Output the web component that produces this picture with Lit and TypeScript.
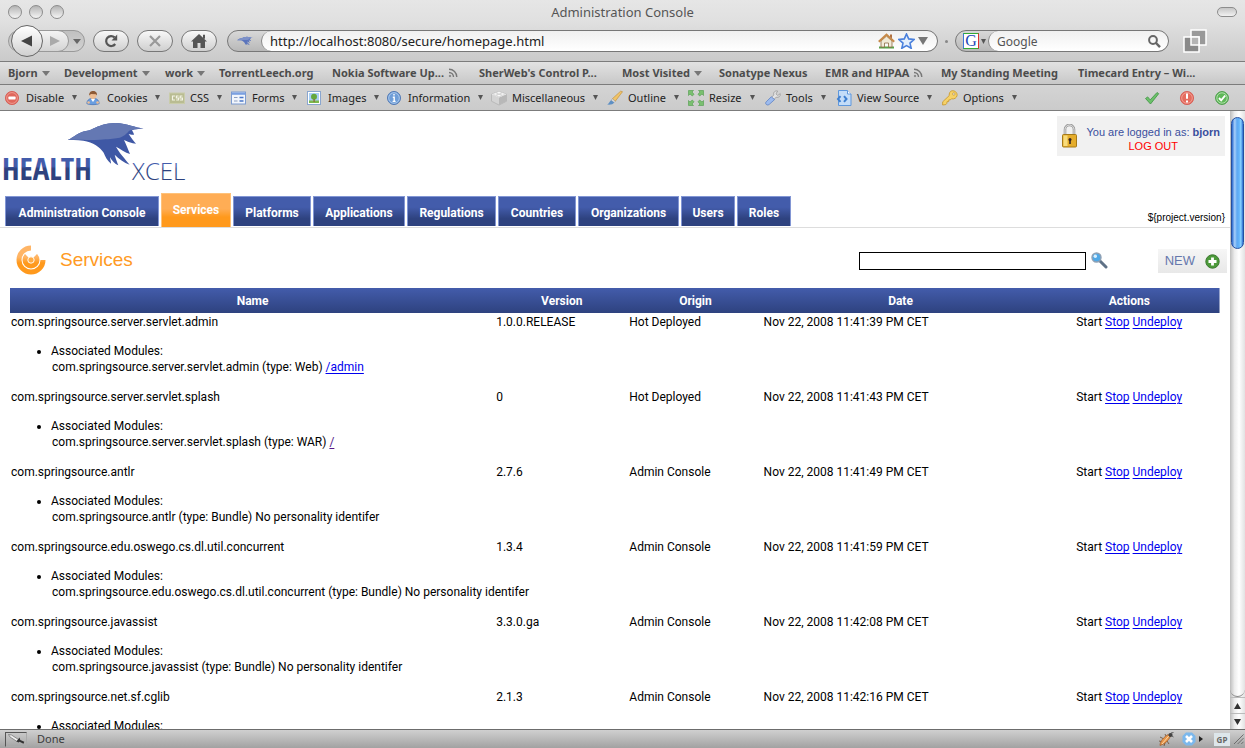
import { LitElement, html, svg, css, nothing, type TemplateResult } from "lit";
import { customElement } from "lit/decorators.js";
import { classMap } from "lit/directives/class-map.js";

const rss = html`<svg width="10" height="10" viewBox="0 0 10 10" fill="none" stroke="#777" stroke-width="1.4"><circle cx="2" cy="8" r=".8" fill="#777" stroke-width=".6"/><path d="M1 4.5A4.5 4.5 0 0 1 5.5 9M1 1.2A7.8 7.8 0 0 1 8.8 9"/></svg>`;
const caret = html`<svg width="8" height="5" viewBox="0 0 8 5"><path d="M0 0h8L4 5z" fill="#777"/></svg>`;
const smallCaret = html`<svg width="5" height="5" viewBox="0 0 5 5"><path d="M0 0h5L2.5 5z" fill="#555"/></svg>`;

interface Bookmark { label: string; mark?: "caret" | "rss"; }
const bookmarks: Bookmark[] = [
  { label: "Bjorn", mark: "caret" },
  { label: "Development", mark: "caret" },
  { label: "work", mark: "caret" },
  { label: "TorrentLeech.org" },
  { label: "Nokia Software Up...", mark: "rss" },
  { label: "SherWeb's Control P..." },
  { label: "Most Visited", mark: "caret" },
  { label: "Sonatype Nexus" },
  { label: "EMR and HIPAA", mark: "rss" },
  { label: "My Standing Meeting" },
  { label: "Timecard Entry – Wi..." },
];

const tools: { label: string; icon: TemplateResult }[] = [
  { label: "Disable", icon: html`<svg width="16" height="16" viewBox="0 0 16 16"><circle cx="7" cy="8" r="6.6" fill="#e0675c" stroke="#d4574e" stroke-width=".8"/><circle cx="7" cy="8" r="5.4" fill="none" stroke="#f0a49c" stroke-width=".8"/><rect x="3.4" y="6.6" width="7.2" height="2.8" rx=".6" fill="#fff"/></svg>` },
  { label: "Cookies", icon: html`<svg width="16" height="16" viewBox="0 0 16 16"><path d="M.8 13.5c.2-3 2.200-4.700 4-4.900h4.400c2.200.3 3.700 2 4 4.900-1.500 1.500-11 1.500-12.400 0z" fill="#6a9ee0" stroke="#3f70b8" stroke-width=".7"/><path d="M4.800 8.800L7 12l2.200-3.200z" fill="#fff"/><circle cx="7" cy="5.600" r="3.400" fill="#eebd92"/><path d="M3.200 5.600C2.900 2.400 5 1.100 7.200 1.100c2.400 0 4.200 1.500 3.700 4.500L9.800 4.200 5 4z" fill="#8e5a35"/><circle cx="2.600" cy="12.500" r="1.300" fill="#eebd92"/><circle cx="11.600" cy="12.500" r="1.300" fill="#eebd92"/></svg>` },
  { label: "CSS", icon: html`<svg width="16" height="16" viewBox="0 0 16 16"><rect x=".5" y="3" width="15" height="10.500" fill="#b9bc92" stroke="#c9ccaa"/><path d="M6 6H3.500v4H6M9.600 6H7.400v2h2.200v2H7.200M13.400 6h-2.200v2h2.200v2H11" fill="none" stroke="#f4f4e6" stroke-width="1.200"/></svg>` },
  { label: "Forms", icon: html`<svg width="16" height="16" viewBox="0 0 16 16"><rect x=".5" y="2" width="14" height="12" fill="#f2f6fc" stroke="#7c9bd0"/><rect x="1" y="2.500" width="13" height="2.300" fill="#7ba0e0"/><path d="M3 7.500h3.500M3 11h3.500" stroke="#8d9fc0"/><path d="M8.500 7.500h4M8.500 11h4" stroke="#4a77c8" stroke-width="1.600"/></svg>` },
  { label: "Images", icon: html`<svg width="16" height="16" viewBox="0 0 16 16"><rect x=".5" y="1.500" width="13" height="13" fill="#fff" stroke="#8aa6cf"/><path d="M2 3h10v10H2z" fill="#a9d0f5"/><path d="M2 10.500h10V13H2z" fill="#7cb84c"/><circle cx="7" cy="6.700" r="3" fill="#65a83c"/><path d="M6.500 9h1.200v3H6.500z" fill="#8c6132"/></svg>` },
  { label: "Information", icon: html`<svg width="16" height="16" viewBox="0 0 16 16"><circle cx="7" cy="8" r="6.500" fill="#6f9ed8" stroke="#5078b4"/><circle cx="7" cy="8" r="5.300" fill="none" stroke="#b8d2f0" stroke-width=".8"/><path d="M7 4v1.600M5.800 7.200h1.400v4M5.600 11.400h3" stroke="#fff" stroke-width="1.400" fill="none"/></svg>` },
  { label: "Miscellaneous", icon: html`<svg width="16" height="16" viewBox="0 0 16 16"><path d="M8 1.500l7.500 2.700v7L8 15 .5 11.200v-7z" fill="#d4d4d4" stroke="#aaa" stroke-width=".6"/><path d="M8 7.500V15l7.500-3.800v-7z" fill="#b8b8b8"/><path d="M8 7.500L.5 4.200 8 1.500l7.500 2.700z" fill="#efefef"/><g fill="#fafafa" stroke="#bbb" stroke-width=".5"><ellipse cx="8" cy="2.700" rx="2" ry="1.200"/><ellipse cx="4.500" cy="4" rx="2" ry="1.200"/><ellipse cx="11.500" cy="4" rx="2" ry="1.200"/><ellipse cx="8" cy="5.600" rx="2" ry="1.200"/></g></svg>` },
  { label: "Outline", icon: html`<svg width="16" height="16" viewBox="0 0 16 16"><path d="M15.500 1.700L8.300 11.200 5.300 8.800 13.600 1.200z" fill="#f0c468" stroke="#c08a34" stroke-width=".6"/><path d="M5.300 8.800l3 2.400-1.200 1.400-3-2.400z" fill="#ddd" stroke="#999" stroke-width=".5"/><path d="M4.100 10.200l3 2.400c-1 2-3.600 2.200-7 2 2-.8 2.400-3.400 4-4.400z" fill="#5d8fc4"/></svg>` },
  { label: "Resize", icon: html`<svg width="16" height="16" viewBox="0 0 16 16" fill="#7ac070" stroke="#4f9a4c" stroke-width=".6"><path d="M.5.500h5L4 2l2 2.200L4.300 6 2 4 .5 5.500z"/><path d="M15.500.500h-5L12 2l-2 2.200L11.700 6 14 4l1.500 1.500zM.5 15.500h5L4 14l2-2.200L4.300 10 2 12 .5 10.500zM15.500 15.500h-5L12 14l-2-2.200 1.700-1.800L14 12l1.500-1.500z"/></svg>` },
  { label: "Tools", icon: html`<svg width="16" height="16" viewBox="0 0 16 16"><path d="M15.200 3.600l-2.400 1.900-1.800-1.600L12.600 1c-2.600-.6-4.600 1.500-3.800 3.900L6.600 7.300l2.200 2.200 2.300-2.200c2.600.6 4.700-1.200 4.100-3.700z" fill="#e2e2e2" stroke="#909090" stroke-width=".7"/><path d="M6.300 6.800L1.200 11.800c-1.800 1.900 1 4.300 2.900 2.700L9.600 9.600z" fill="#9dbbee" stroke="#5f83c4" stroke-width=".8"/></svg>` },
  { label: "View Source", icon: html`<svg width="16" height="16" viewBox="0 0 16 16"><path d="M2.500.500h9l3.500 3.500v11.500H2.500z" fill="#c3dcf8" stroke="#5e97dc"/><path d="M11.500.500V4H15" fill="#fff" stroke="#5e97dc"/><path d="M4.500 6.200L2 9l2.500 2.800M8 6.200L10.500 9 8 11.800" fill="none" stroke="#3e7fd0" stroke-width="2"/></svg>` },
  { label: "Options", icon: html`<svg width="16" height="16" viewBox="0 0 16 16"><path d="M9.800.800c3-.5 5.600 1.800 5.300 4.500-.3 2.600-3 4.200-5.700 3.500l-1 1-1.600.1-.1 1.700-1.700.1-.2 1.700-1 1.200-3.200.400.100-3.200L7.200 5.600C7 3.400 7.800 1.400 9.800.800z" fill="#f6d268" stroke="#c89528" stroke-width=".8"/><circle cx="11.800" cy="4" r="1.300" fill="#d8d8d8" stroke="#c89528" stroke-width=".6"/></svg>` },
];

const tabs = ["Administration Console", "Services", "Platforms", "Applications", "Regulations", "Countries", "Organizations", "Users", "Roles"];

interface Service {
  name: string; version: string; origin: string; date: string;
  type: string; link?: string; visited?: boolean;
}
const services: Service[] = [
  { name: "com.springsource.server.servlet.admin", version: "1.0.0.RELEASE", origin: "Hot Deployed", date: "Nov 22, 2008 11:41:39 PM CET", type: "Web", link: "/admin" },
  { name: "com.springsource.server.servlet.splash", version: "0", origin: "Hot Deployed", date: "Nov 22, 2008 11:41:43 PM CET", type: "WAR", link: "/", visited: true },
  { name: "com.springsource.antlr", version: "2.7.6", origin: "Admin Console", date: "Nov 22, 2008 11:41:49 PM CET", type: "Bundle" },
  { name: "com.springsource.edu.oswego.cs.dl.util.concurrent", version: "1.3.4", origin: "Admin Console", date: "Nov 22, 2008 11:41:59 PM CET", type: "Bundle" },
  { name: "com.springsource.javassist", version: "3.3.0.ga", origin: "Admin Console", date: "Nov 22, 2008 11:42:08 PM CET", type: "Bundle" },
  { name: "com.springsource.net.sf.cglib", version: "2.1.3", origin: "Admin Console", date: "Nov 22, 2008 11:42:16 PM CET", type: "Bundle" },
];

// The brand bird: a dark body with feathers below a lighter wing.
const bird = (body: string, wing: string) => svg`
  <path d="M203 84C222 76 236 60 258 57C278 56 290 36 345 33C385 34 405 48 431 49C415 52 404 51 396 55C400 62 402 66 402 68C396 69 390 67 386 66C392 76 402 88 408 95C396 94 380 88 372 84C378 96 384 112 390 126C376 122 360 110 348 104C356 120 376 142 389 158C372 152 356 140 344 128C347 140 352 152 355 160C344 156 336 146 330 136C331 144 333 150 333 155C322 146 316 134 311 122C300 106 280 90 250 86C234 83 218 84 203 84Z" fill=${body} />
  <path d="M203 84C222 76 236 60 258 57C278 56 290 36 345 33C385 34 405 48 431 49C400 52 392 54 386 58C366 82 350 80 300 83C260 85 235 82 203 84Z" fill=${wing} />`;

@customElement("app-root")
export class AppRoot extends LitElement {
  static styles = css`
    :host {
      display: flex; flex-direction: column; height: 100vh; overflow: hidden;
      background: #fff; color: #000;
      font-family: "Noto Sans", "Open Sans", sans-serif; font-size: 12px;
    }
    * { box-sizing: border-box; }
    button, input { font: inherit; color: inherit; margin: 0; padding: 0; border: 0; background: none; }
    svg { display: block; flex: none; }

    .window-top { background: linear-gradient(#e6e6e6, #e0e0e0 35%, #cacaca); border-bottom: 1px solid #7c7c7c; }
    .titlebar { display: grid; grid-template-columns: 80px 1fr 80px; align-items: center; height: 23px; padding: 0 8px; }
    .lights { display: flex; gap: 7px; }
    .light { width: 14px; height: 14px; border-radius: 50%; border: 1px solid #8c8c8c; background: linear-gradient(#b4b4b4, #f4f4f4); }
    .title { text-align: center; font-size: 13px; line-height: 18px; color: #555; }
    .pill { justify-self: end; width: 20px; height: 10px; border-radius: 5px; border: 1px solid #8c8c8c; background: linear-gradient(#c6c6c6, #f2f2f2); }

    .navbar { display: flex; align-items: center; gap: 8px; height: 38px; padding: 0 38px 2px 8px; }
    .history { display: flex; align-items: center; width: 77px; height: 22px; border: 1px solid #999; border-radius: 11px; background: linear-gradient(#c0c0c0, #d2d2d2); }
    .back { width: 32px; height: 32px; flex: none; margin-left: 2px; border-radius: 50%; border: 1px solid #666; background: linear-gradient(#fff, #d0d0d0); display: grid; place-items: center; z-index: 1; }
    .forward { width: 32px; height: 22px; flex: none; margin-left: -6px; padding-left: 4px; border: 1px solid #999; border-radius: 0 11px 11px 0; background: linear-gradient(#f4f4f4, #d4d4d4); display: grid; place-items: center; }
    .recent { flex: 1; display: grid; place-items: center; }
    .round { width: 36px; height: 22px; border-radius: 11px; border: 1px solid #777; background: linear-gradient(#f8f8f8, #cfcfcf); display: grid; place-items: center; flex: none; }
    .urlbox, .searchbox { display: flex; height: 22px; border: 1px solid #777; border-radius: 11px; background: linear-gradient(#d8d8d8, #b8b8b8); overflow: hidden; }
    .urlbox { flex: 1; margin-left: 2px; }
    .searchbox { width: 214px; flex: none; }
    .favicon { width: 33px; flex: none; display: grid; place-items: center; }
    .engine { width: 32px; flex: none; display: flex; align-items: center; justify-content: flex-end; gap: 2px; padding-right: 2px; }
    .google { width: 16px; height: 16px; flex: none; border: 1px solid #3c78d8; border-right-color: #d33; border-bottom-color: #3a3; border-top-color: #3a3; background: #fff; color: #2347b8; font: 16px/14px "Liberation Serif", serif; text-align: center; }
    .field { flex: 1; min-width: 0; display: flex; align-items: center; gap: 3px; border-left: 1px solid #888; border-radius: 10px; background: linear-gradient(#f0f0f0, #fff); padding: 0 9px 0 8px; }
    .field input { flex: 1; min-width: 0; width: 0; height: 20px; font-size: 13px; outline: 0; color: #222; }
    .searchbox .field { padding-right: 7px; }
    .searchbox .field input { font-size: 12px; color: #555; }
    .dot { width: 3px; height: 3px; border-radius: 50%; background: #888; margin-left: -1px; margin-right: -1px; }
    .windows { margin-left: 6px; }

    .bookmarks { display: grid; grid-template-columns: 56px 101px 54px 113px 147px 143px 97px 106px 116px 137px auto; justify-content: start; align-items: center; height: 23px; padding-left: 8px; background: linear-gradient(#e2e2e2, #c8c8c8); border-bottom: 1px solid #7c7c7c; }
    .bookmark { display: flex; align-items: center; gap: 4px; color: #4c4c4c; font-size: 11px; font-weight: 700; line-height: 16px; white-space: nowrap; text-decoration: none; }

    .devbar { display: grid; grid-template-columns: 81px 83px 62px 76px 80px 104px 116px 81px 77px 71px 106px 1fr; align-items: center; height: 26px; padding: 0 15px 0 5px; background: linear-gradient(#d4d4d4, #cbcbcb); border-bottom: 1px solid #7c7c7c; }
    .tool { display: flex; align-items: center; gap: 5px; color: #222; font-size: 11px; line-height: 16px; white-space: nowrap; }
    .tool .caret { padding-left: 3px; }
    .last { display: flex; align-items: center; justify-content: space-between; }
    .status-icons { display: flex; gap: 19px; }

    .viewport { flex: 1; min-height: 0; display: flex; }
    .page { flex: 1; min-width: 0; overflow: hidden; font-family: Roboto, "Noto Sans", sans-serif; font-size: 12px; line-height: 16px; }
    .masthead { display: flex; justify-content: space-between; align-items: flex-start; padding: 5px 5px 0 0; }
    .logo { margin-top: 4px; overflow: visible; }
    .logo-bold { font-family: "Open Sans Condensed", "Roboto Condensed", "Liberation Sans Narrow", "Open Sans", sans-serif; font-weight: 700; font-size: 31px; }
    .logo-light { font-family: "Open Sans", sans-serif; font-weight: 300; font-size: 24px; }
    .login { display: flex; align-items: center; gap: 8px; height: 40px; padding: 0 5px 0 4px; background: #f1f1f1; color: #3a4f9e; font: 11px/14px "Liberation Sans", Arial, sans-serif; text-align: center; }
    .who { padding-top: 6px; }
    .login a { color: #f00; text-decoration: none; }
    .tabrow { display: flex; justify-content: space-between; align-items: flex-end; margin-top: 9px; padding: 0 5px; border-bottom: 1px solid #ddd; }
    .tabs { display: grid; grid-template-columns: 154px 70px 78px 92px 89px 78px 101px 54px 54px; gap: 2px; align-items: end; }
    .tab { height: 30px; margin-bottom: 1px; border: 1px solid #8296d4; border-bottom: 0; background: linear-gradient(#435cab 35%, #2e427f 75%); color: #fff; font-weight: 700; font-size: 12px; line-height: 33px; text-align: center; text-decoration: none; white-space: nowrap; }
    .tab.active { height: 34px; margin-bottom: 0; border-color: #ffc27a; background: linear-gradient(#ffad55 45%, #ff991c 70%); }
    .version { font: 10px/18px "Liberation Sans", Arial, sans-serif; }

    .section { display: flex; align-items: center; padding: 17px 3px 13px 16px; }
    .section h1 { margin: 0 auto 0 14px; color: #ff9a24; font: 19px/28px "Liberation Sans", Arial, sans-serif; }
    .search { display: flex; align-items: center; gap: 5px; margin-right: 50px; padding-top: 2px; }
    .search input { width: 227px; height: 18px; border: 1px solid #000; background: #fff; }
    .search button { padding-bottom: 2px; }
    .new { display: flex; align-items: center; gap: 10px; height: 24px; margin-top: 2px; padding: 0 7px; background: linear-gradient(#f6f6f6, #e8e8e8); color: #6678ad; font: 13px/16px "Liberation Sans", Arial, sans-serif; }

    .table-wrap { padding: 0 10px; }
    table { width: 100%; table-layout: fixed; border-collapse: collapse; }
    th { height: 25px; padding: 0 1px; color: #fff; font-weight: 700; }
    thead { background: linear-gradient(#435cab, #2e427f); }
    .c-name { width: 40.1%; } .c-version { width: 11%; } .c-origin { width: 11.1%; } .c-date { width: 22.8%; } .c-actions { width: 15%; }
    td { padding: 1px; vertical-align: top; white-space: nowrap; }
    .actions { text-align: center; }
    ul { margin: 13px 0 12px; padding-left: 40px; }
    .module { padding-left: 1px; }
    td a { color: #00e; text-underline-offset: 2px; }
    td a.seen { color: #551a8b; }

    .scrollbar { width: 15px; flex: none; display: flex; flex-direction: column; background: linear-gradient(90deg, #bdbdbd, #ececec 30%, #fff 60%, #e2e2e2); }
    .track { flex: 1; padding: 6px 1px; border-bottom: 1px solid #888; border-radius: 0 0 8px 8px; }
    .thumb { height: 23%; border-radius: 7px; border: 1px solid #2450a0; background: linear-gradient(90deg, #2a6ad0, #a8d0fa 25%, #5ea8f2 45%, #62b4fa 65%, #8ad2ff 80%, #2a6ad0); }
    .step { height: 16px; display: grid; place-items: center; border-top: 1px solid #bbb; }

    .statusbar { display: flex; align-items: center; height: 19px; padding: 0 1px 0 5px; border-top: 1px solid #6c6c6c; background: linear-gradient(#d0d0d0, #a2a2a2); font-size: 11px; line-height: 16px; color: #3c3c3c; }
    .picker { width: 22px; height: 15px; border: 1px solid #555; border-right-color: #aaa; border-bottom-color: #aaa; display: grid; place-items: center; margin-right: 10px; }
    .extras { display: flex; align-items: center; gap: 3px; margin-left: auto; }
    .gp { margin: 0 1px 0 8px; width: 16px; height: 13px; background: #dde6ea; color: #666; font-size: 8px; font-weight: 700; line-height: 13px; text-align: center; }
    .bug { margin-right: 5px; }
  `;

  private renderBrowser() {
    return html`
      <header class="window-top">
        <div class="titlebar">
          <div class="lights"><span class="light"></span><span class="light"></span><span class="light"></span></div>
          <div class="title">Administration Console</div>
          <span class="pill"></span>
        </div>
        <div class="navbar">
          <div class="history">
            <button class="back" aria-label="Back"><svg width="12" height="12" viewBox="0 0 12 12"><path d="M0 6L11 .5v11z" fill="#444"/></svg></button>
            <button class="forward" aria-label="Forward"><svg width="10" height="10" viewBox="0 0 10 10"><path d="M10 5L0 0v10z" fill="#aaa"/></svg></button>
            <button class="recent" aria-label="Recent pages"><svg width="8" height="5" viewBox="0 0 8 5"><path d="M0 0h8L4 5z" fill="#666"/></svg></button>
          </div>
          <button class="round" aria-label="Reload"><svg width="14" height="14" viewBox="0 0 14 14"><path d="M11.200 10A5 5 0 1 1 10.600 3.400" fill="none" stroke="#555" stroke-width="2.200"/><path d="M13.200.500v6H7.500z" fill="#555"/></svg></button>
          <button class="round" aria-label="Stop"><svg width="12" height="12" viewBox="0 0 12 12"><path d="M1 1l10 10M11 1L1 11" stroke="#999" stroke-width="2.200"/></svg></button>
          <button class="round" aria-label="Home"><svg width="16" height="14" viewBox="0 0 16 14"><path d="M8 0l8 7.500h-2V14H9.500V9h-3v5H2V7.500H0z" fill="#555"/><path d="M12 .800h2v4h-2z" fill="#555"/></svg></button>
          <div class="urlbox">
            <span class="favicon"><svg width="16" height="10" viewBox="200 30 235 132">${bird("#5a74bc", "#7c90c8")}</svg></span>
            <div class="field">
              <input aria-label="Address" value="http://localhost:8080/secure/homepage.html" />
              <svg width="17" height="16" viewBox="0 0 17 16"><path d="M1 14.500h15" stroke="#5aa048" stroke-width="2"/><path d="M3 8v6h3.500v-4h4v4H14V8L8.500 3z" fill="#f0ead8" stroke="#8c6b44" stroke-width=".8"/><path d="M.8 8.800L8.500 1.800l7.700 7" fill="none" stroke="#c68a4a" stroke-width="2.200"/><path d="M12 1.500h2v4l-2-1.800z" fill="#b07040"/></svg>
              <svg width="17" height="16" viewBox="0 0 17 16"><path d="M8.500 1l2.200 4.900 5.300.6-4 3.600 1.200 5.200-4.700-2.700-4.700 2.700L5 10.100 1 6.500l5.300-.6z" fill="#e4effc" stroke="#4a80dc" stroke-width="1.600"/></svg>
              <svg width="10" height="8" viewBox="0 0 10 8"><path d="M0 0h10L5 8z" fill="#777"/></svg>
            </div>
          </div>
          <span class="dot"></span>
          <div class="searchbox">
            <span class="engine"><span class="google">G</span>${smallCaret}</span>
            <div class="field">
              <input aria-label="Web search" value="Google" />
              <svg width="13" height="13" viewBox="0 0 13 13" fill="none" stroke="#666"><circle cx="5" cy="5" r="3.900" stroke-width="2"/><path d="M8 8l4 4.200" stroke-width="2.400"/></svg>
            </div>
          </div>
          <svg class="windows" width="24" height="24" viewBox="0 0 24 24"><rect x="8" y="1" width="15" height="15" fill="#999" stroke="#fff" stroke-width="1.500"/><rect x="1" y="8" width="15" height="15" fill="#8a8a8a" stroke="#fff" stroke-width="1.500"/><path d="M8 8h8v8H8z" fill="#b4b4b4" stroke="#fff" stroke-width="1.500"/></svg>
        </div>
      </header>
      <nav class="bookmarks">
        ${bookmarks.map((b) => html`<a class="bookmark" href="#">${b.label}${b.mark === "caret" ? caret : b.mark === "rss" ? rss : nothing}</a>`)}
      </nav>
      <div class="devbar">
        ${tools.slice(0, -1).map((t) => this.renderTool(t))}
        <div class="last">
          ${this.renderTool(tools[tools.length - 1])}
          <div class="status-icons">
            <svg width="16" height="16" viewBox="0 0 16 16"><path d="M1.500 8.500l2.200-1.600 2.500 3L13 2.500l1.700 1.200L6.500 14z" fill="#6cc06a" stroke="#3d9442" stroke-width=".8"/></svg>
            <svg width="16" height="16" viewBox="0 0 16 16"><circle cx="8" cy="8" r="6.600" fill="#e56c5e" stroke="#d4574e" stroke-width=".8"/><circle cx="8" cy="8" r="5.300" fill="none" stroke="#f3a8a0" stroke-width=".8"/><path d="M8 3.500v5.200M8 10.500v2" stroke="#fff" stroke-width="2"/></svg>
            <svg width="16" height="16" viewBox="0 0 16 16"><circle cx="8" cy="8" r="6.400" fill="#5fb858" stroke="#4a9c48"/><circle cx="8" cy="8" r="5.200" fill="none" stroke="#c4e8c0" stroke-width=".8"/><path d="M5 8l2.200 2.400L11.200 5.500" fill="none" stroke="#fff" stroke-width="1.900"/></svg>
          </div>
        </div>
      </div>`;
  }

  private renderTool(t: { label: string; icon: TemplateResult }) {
    return html`<button class="tool">${t.icon}<span>${t.label}</span><span class="caret">${smallCaret}</span></button>`;
  }

  private renderRow(s: Service) {
    return html`<tr>
      <td>${s.name}
        <ul><li>Associated Modules:<div class="module">${s.name} (type: ${s.type}) ${s.link
          ? html`<a href="#" class=${classMap({ seen: !!s.visited })}>${s.link}</a>`
          : "No personality identifer"}</div></li></ul>
      </td>
      <td>${s.version}</td><td>${s.origin}</td><td>${s.date}</td>
      <td class="actions">Start <a href="#">Stop</a> <a href="#">Undeploy</a></td>
    </tr>`;
  }

  render() {
    return html`
      ${this.renderBrowser()}
      <div class="viewport">
        <main class="page">
          <div class="masthead">
            <svg class="logo" width="190" height="64" viewBox="0 0 190 64" role="img" aria-label="Health Xcel">
              <defs>
                <linearGradient id="ink" x1="0" y1="35" x2="0" y2="60" gradientUnits="userSpaceOnUse"><stop offset="0" stop-color="#435cab"/><stop offset=".45" stop-color="#435cab"/><stop offset=".55" stop-color="#2e427f"/><stop offset="1" stop-color="#2e427f"/></linearGradient>
              </defs>
              <svg x="0" y="0" width="190" height="64" viewBox="0 24 570 192">${bird("#3f58a5", "#6478b3")}</svg>
              <text class="logo-bold" x="2" y="60" fill="url(#ink)">HEALTH</text>
              <text class="logo-light" x="132" y="60" fill="url(#ink)">XCEL</text>
            </svg>
            <div class="login">
              <svg width="17" height="24" viewBox="0 0 17 24"><path d="M4 11V5.500a4.500 4.500 0 0 1 9 0V11" fill="none" stroke="#999" stroke-width="2.600"/><path d="M4 11V5.500a4.500 4.500 0 0 1 9 0V11" fill="none" stroke="#e4e4e4"/><rect x="1.500" y="10.500" width="14" height="12.500" rx="1" fill="#e5ad2c" stroke="#a67a18"/><path d="M2.500 11.500h4v10.500h-4z" fill="#f8dc7c"/><circle cx="9" cy="15.500" r="1.500" fill="#322"/><path d="M8.200 16h1.600v4H8.200z" fill="#322"/></svg>
              <div class="who">You are logged in as: <b>bjorn</b><br /><a href="#">LOG OUT</a></div>
            </div>
          </div>
          <div class="tabrow">
            <nav class="tabs">
              ${tabs.map((t) => html`<a href="#" class=${classMap({ tab: true, active: t === "Services" })}>${t}</a>`)}
            </nav>
            <span class="version">\${project.version}</span>
          </div>
          <div class="section">
            <svg width="30" height="30" viewBox="0 0 30 30">
              <defs><linearGradient id="sun" gradientUnits="userSpaceOnUse" x1="0" y1="0" x2="0" y2="30"><stop offset=".4" stop-color="#ffb566"/><stop offset=".6" stop-color="#ff991c"/></linearGradient></defs>
              <path d="M15 .5A14.500 14.500 0 1 0 29.500 15H24.500A9.500 9.500 0 1 1 15 5.500z" fill="url(#sun)"/>
              <path d="M15 15L9 9A8.500 8.500 0 1 0 21 9z" fill="url(#sun)"/>
              <circle cx="15" cy="15" r="3.200" fill="#ffab44" stroke="#fff" stroke-width=".9"/>
            </svg>
            <h1>Services</h1>
            <form class="search">
              <input type="text" aria-label="Search services" />
              <button type="button" aria-label="Search"><svg width="17" height="17" viewBox="0 0 17 17"><path d="M8.500 8.500l6.500 6.500" stroke="#5f7186" stroke-width="3" stroke-linecap="round"/><circle cx="5.500" cy="5.500" r="4.500" fill="#4fa8e6" stroke="#8ea0b4" stroke-width="1.400"/><circle cx="4.300" cy="4.300" r="1.700" fill="#d8f0ff"/></svg></button>
            </form>
            <button class="new">NEW<svg width="15" height="15" viewBox="0 0 15 15"><circle cx="7.500" cy="7.500" r="6.700" fill="#4c9a3a" stroke="#3c7a30"/><path d="M7.500 3.500v8M3.500 7.500h8" stroke="#fff" stroke-width="2.800"/></svg></button>
          </div>
          <div class="table-wrap">
            <table>
              <thead><tr><th class="c-name">Name</th><th class="c-version">Version</th><th class="c-origin">Origin</th><th class="c-date">Date</th><th class="c-actions">Actions</th></tr></thead>
              <tbody>${services.map((s) => this.renderRow(s))}</tbody>
            </table>
          </div>
        </main>
        <div class="scrollbar">
          <div class="track"><div class="thumb"></div></div>
          <div class="step"><svg width="7" height="6" viewBox="0 0 7 6"><path d="M0 6h7L3.500 0z" fill="#333"/></svg></div>
          <div class="step"><svg width="7" height="6" viewBox="0 0 7 6"><path d="M0 0h7L3.500 6z" fill="#333"/></svg></div>
        </div>
      </div>
      <footer class="statusbar">
        <span class="picker"><svg width="18" height="12" viewBox="0 0 18 12"><path d="M1.500 1.500l3 .5 7 4.500-1.500 2-7-4.500z" fill="#eee" stroke="#777" stroke-width=".8"/><path d="M12.500 4.500l-3 4 2 1 1-.800 4 2 .800-2-4-1.700z" fill="#333"/></svg></span>
        Done
        <div class="extras">
          <svg class="bug" width="16" height="15" viewBox="0 0 16 15"><path d="M2 5l4 2M1 9l4 1M6 14l1-3M11 12L9 9M7 2l2 4" stroke="#6a4a30" stroke-width=".8"/><path d="M12.500 4.500C10 9 7 12 2 13.500 2 9 6 5 10 2.500z" fill="#e8964a" stroke="#a05a28" stroke-width=".7"/><path d="M11.300 3.500L4 12" stroke="#fbd9a8"/><circle cx="12.500" cy="3" r="2.100" fill="#444"/><path d="M13 1l2.500-.5M14 4l1.500 1" stroke="#444" stroke-width=".8"/></svg>
          <svg width="14" height="14" viewBox="0 0 14 14"><path d="M4 .500h6L13.500 4v6L10 13.500H4L.5 10V4z" fill="#7cb8ec"/><path d="M4 4l6 6M10 4l-6 6" stroke="#fff" stroke-width="2.600"/></svg>
          <svg width="4" height="6" viewBox="0 0 4 6"><path d="M0 0v6l4-3z" fill="#222"/></svg>
          <span class="gp">GP</span>
          <svg width="10" height="12" viewBox="2 1 11 12"><path d="M2 12.500L12.500 2M6 12.500L12.500 6M10 12.500l2.500-2.500" stroke="#666"/></svg>
        </div>
      </footer>`;
  }
}
